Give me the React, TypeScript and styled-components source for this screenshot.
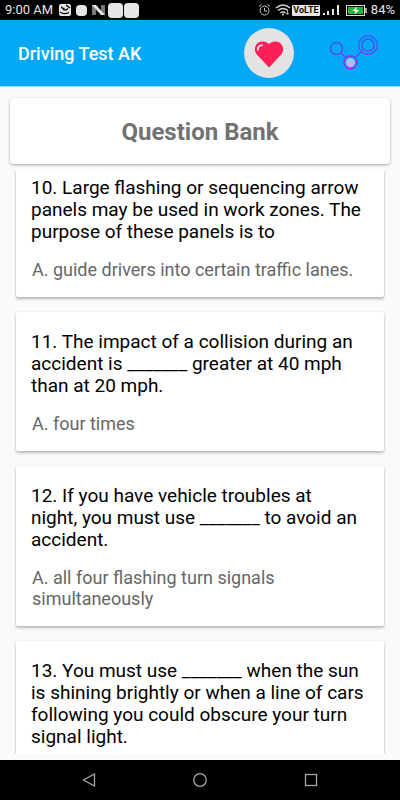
import React from "react";
import styled, { createGlobalStyle } from "styled-components";

const GlobalStyle = createGlobalStyle`
  *, *::before, *::after { box-sizing: border-box; }
  body { margin: 0; background: #fafafa; font-family: Roboto, "Noto Sans", sans-serif; }
  h1, h2, p, ol { margin: 0; padding: 0; }
`;

const Screen = styled.div`
  display: flex;
  flex-direction: column;
  height: 100vh;
  overflow: hidden;
`;

const StatusBar = styled.div`
  display: flex;
  justify-content: space-between;
  align-items: center;
  flex: none;
  height: 20px;
  padding: 0 5px;
  background: #000;
  color: #e6e6e6;
  font-size: 13px;
  line-height: 20px;
`;

const StatusGroup = styled.div`
  display: flex;
  align-items: center;
  gap: 3px;
  svg { display: block; }
`;

const Header = styled.header`
  display: flex;
  align-items: center;
  flex: none;
  height: 67px;
  padding: 0 21px 0 18px;
  background: #03a9f4;
  border-bottom: 1px solid #9bd8f7;
`;

const AppTitle = styled.h1`
  flex: 1;
  padding-top: 2px;
  color: #fff;
  font-size: 18px;
  line-height: 24px;
  font-weight: 500;
`;

const IconButton = styled.button<{ $filled?: boolean }>`
  display: flex;
  align-items: center;
  justify-content: center;
  width: 50px;
  height: 50px;
  padding: 0;
  border: 0;
  border-radius: 50%;
  background: ${(p) => (p.$filled ? "#e3e3e3" : "transparent")};
  & + & { margin-left: 35px; }
`;

const BankCard = styled.section`
  flex: none;
  margin: 11px 10px 7px;
  padding: 19px 0 17px;
  border-radius: 4px;
  background: #fff;
  box-shadow: 0 1px 3px rgba(0, 0, 0, 0.35);
  text-align: center;
`;

const BankTitle = styled.h2`
  color: #727272;
  font-size: 24px;
  line-height: 30px;
  font-weight: 700;
`;

const Viewport = styled.main`
  flex: 1;
  min-height: 0;
  overflow: hidden;
`;

const QuestionList = styled.ol`
  display: flex;
  flex-direction: column;
  gap: 15px;
  margin: -13px 16px 0;
  list-style: none;
`;

const Card = styled.li`
  padding: 19px 15px 17px;
  border-radius: 2px;
  background: #fff;
  box-shadow: 0 2px 3px rgba(0, 0, 0, 0.26), 0 0 2px rgba(0, 0, 0, 0.1);
`;

const Question = styled.p`
  color: #000;
  font-size: 19px;
  line-height: 22px;
  white-space: pre-line;
`;

const Answer = styled.p`
  margin-top: 16px;
  padding: 0 1px;
  color: #666;
  font-size: 18px;
  line-height: 21px;
`;

const Footing = styled.div`
  flex: none;
  height: 6px;
  background: #fafafa;
`;

const NavBar = styled.nav`
  display: flex;
  justify-content: center;
  align-items: center;
  gap: 87px;
  flex: none;
  height: 40px;
  background: #000;
`;

const NavButton = styled.button`
  display: flex;
  align-items: center;
  justify-content: center;
  width: 24px;
  height: 24px;
  padding: 0;
  border: 0;
  background: transparent;
`;

const Notifications = () => (
  <svg width="84" height="20" viewBox="0 0 84 20" fill="#e6e6e6" aria-hidden="true">
    <rect x="3" y="4" width="12" height="12" rx="2" />
    <path d="M5.500 6.500c0 2 2 2.500 3 1.500M7 9.500q3 1.500 5-1M4 12q4 3 9 .5" fill="none" stroke="#000" strokeWidth="1.300" />
    <path d="M10 5l4 3" stroke="#000" strokeWidth="1.300" />
    <rect x="20" y="5" width="11" height="11" rx="4" />
    <path d="M36 5h4v10h-4zM45 5h4v10h-4z" fill="#777" />
    <path d="M36 5h4l9 10h-4z" />
    <rect x="52" y="3" width="15" height="15" rx="4" />
    <rect x="68" y="3" width="15" height="15" rx="4" />
  </svg>
);

const SystemIcons = () => (
  <svg width="110" height="20" viewBox="0 0 110 20" fill="none" aria-hidden="true">
    <circle cx="6.500" cy="10.500" r="4.500" stroke="#c8c8c8" />
    <path d="M6.500 8v3h2.500M1 6.500l2.500-2M9.500 4.500L12 6.500" stroke="#c8c8c8" />
    <path d="M18 8q7-6 14 0M20 10.500q5-4 10 0M22.500 13q2.500-2 5 0" stroke="#d4d4d4" strokeWidth="1.600" />
    <circle cx="25" cy="14.500" r="1" fill="#d4d4d4" />
    <path d="M29.500 10.500v4M28 13l1.500 1.500L31 13" stroke="#aaa" />
    <rect x="34" y="5" width="28" height="11" rx="1" fill="#e6e6e6" />
    <text x="48" y="13" textAnchor="middle" fill="#111" fontFamily="Roboto, sans-serif" fontSize="9" fontWeight="700">VoLTE</text>
    <path d="M65 13h2v2h-2zM69 11h2v4h-2zM74 9h2v6h-2zM79 5h2v10h-2z" fill="#e6e6e6" />
    <rect x="88.500" y="5.500" width="18" height="10" stroke="#ddd" fill="#000" />
    <rect x="90" y="7" width="15" height="7" fill="#26b336" />
    <path d="M108 8v5" stroke="#ddd" strokeWidth="1.500" />
    <path d="M99 6.500l-4.500 4.500h3l-1 3.500 4.500-4.500h-3z" fill="#fff" />
  </svg>
);

const Heart = () => (
  <svg width="50" height="50" viewBox="0 0 50 50" aria-hidden="true">
    <path d="M25 39.500L12.800 26.500C10 23 10.500 18 13 15.700c3.500-3.200 9.500-2.500 12 .3 2.500-2.800 8.500-3.500 12-.3 2.500 2.300 3 7.300.2 10.800z" fill="#ff1f57" />
    <path d="M13.700 22c0-3.500 1.800-4.800 4.500-4.800" fill="none" stroke="#fff" strokeWidth="1.600" strokeLinecap="round" />
  </svg>
);

const Share = () => (
  <svg width="50" height="50" viewBox="0 0 50 50" fill="none" aria-hidden="true">
    <defs>
      <linearGradient id="stroke" gradientUnits="userSpaceOnUse" x1="0" y1="6" x2="0" y2="41">
        <stop offset="0" stopColor="#2c62f8" />
        <stop offset="0.450" stopColor="#5a49f0" />
        <stop offset="0.700" stopColor="#8a30ea" />
        <stop offset="1" stopColor="#c010e5" />
      </linearGradient>
      <linearGradient id="node" x1="0" y1="0" x2="0" y2="1">
        <stop offset="0" stopColor="#a1c8fa" />
        <stop offset="1" stopColor="#d1a8f3" />
      </linearGradient>
    </defs>
    <g stroke="url(#stroke)" strokeWidth="1.400">
      <circle cx="7.500" cy="20.500" r="6" />
      <circle cx="39" cy="17" r="9.300" />
      <circle cx="39" cy="17" r="6" />
      <circle cx="21.500" cy="34.500" r="6.500" />
      <path d="M11.800 24.800l5 5M26.200 29.800l6.300-6.200" />
    </g>
    <circle cx="21.500" cy="34.500" r="4.500" fill="url(#node)" />
  </svg>
);

const questions: { text: string; answer?: string }[] = [
  {
    text: "10. Large flashing or sequencing arrow panels may be used in work zones. The purpose of these panels is to",
    answer: "A. guide drivers into certain traffic lanes.",
  },
  {
    text: "11. The impact of a collision during an accident is _______ greater at 40 mph than at 20 mph.",
    answer: "A. four times",
  },
  {
    text: "12. If you have vehicle troubles at\nnight, you must use _______ to avoid an accident.",
    answer: "A. all four flashing turn signals simultaneously",
  },
  {
    text: "13. You must use _______ when the sun is shining brightly or when a line of cars following you could obscure your turn signal light.",
  },
];

export default function App() {
  return (
    <Screen>
      <GlobalStyle />
      <StatusBar>
        <StatusGroup>
          <span>9:00 AM</span>
          <Notifications />
        </StatusGroup>
        <StatusGroup>
          <SystemIcons />
          <span>84%</span>
        </StatusGroup>
      </StatusBar>
      <Header>
        <AppTitle>Driving Test AK</AppTitle>
        <IconButton type="button" aria-label="Favorites" $filled>
          <Heart />
        </IconButton>
        <IconButton type="button" aria-label="Share">
          <Share />
        </IconButton>
      </Header>
      <BankCard>
        <BankTitle>Question Bank</BankTitle>
      </BankCard>
      <Viewport>
        <QuestionList>
          {questions.map((q) => (
            <Card key={q.text}>
              <Question>{q.text}</Question>
              {q.answer && <Answer>{q.answer}</Answer>}
            </Card>
          ))}
        </QuestionList>
      </Viewport>
      <Footing />
      <NavBar>
        <NavButton type="button" aria-label="Back">
          <svg width="24" height="24" viewBox="0 0 24 24" fill="none" stroke="#aaa" strokeWidth="1.300">
            <path d="M17.500 6v12L6.500 12z" />
          </svg>
        </NavButton>
        <NavButton type="button" aria-label="Home">
          <svg width="24" height="24" viewBox="0 0 24 24" fill="none" stroke="#aaa" strokeWidth="1.300">
            <circle cx="12" cy="12" r="6.300" />
          </svg>
        </NavButton>
        <NavButton type="button" aria-label="Recent apps">
          <svg width="24" height="24" viewBox="0 0 24 24" fill="none" stroke="#aaa" strokeWidth="1.300">
            <rect x="6.500" y="6.500" width="11" height="11" />
          </svg>
        </NavButton>
      </NavBar>
    </Screen>
  );
}
